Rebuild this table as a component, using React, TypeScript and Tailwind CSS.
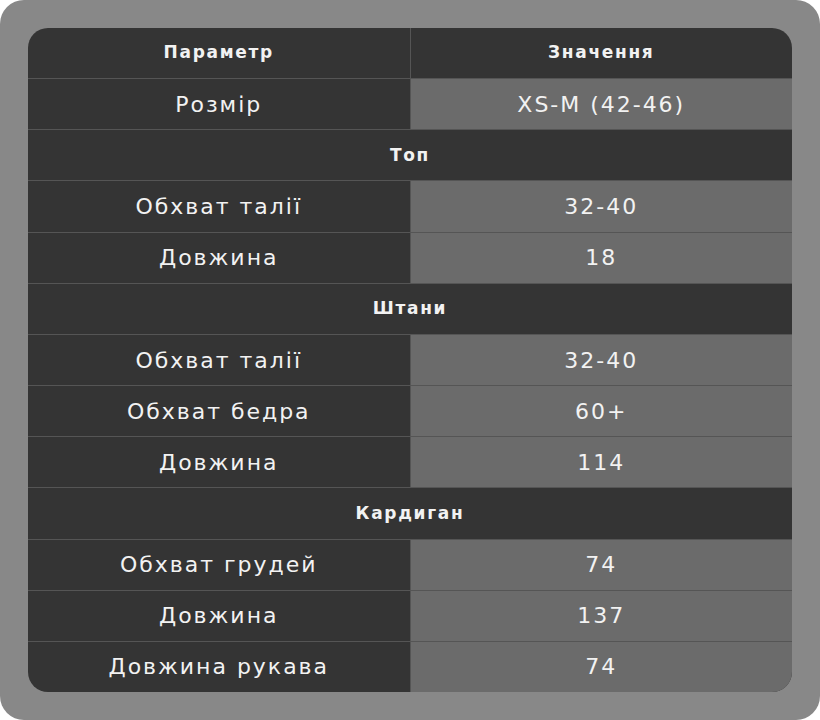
import React from 'react';

type Row =
    | { kind: 'section'; label: string }
    | { kind: 'item'; label: string; value: string };

const ROWS: Row[] = [
    { kind: 'item', label: 'Розмір', value: 'XS-M (42-46)' },
    { kind: 'section', label: 'Топ' },
    { kind: 'item', label: 'Обхват талії', value: '32-40' },
    { kind: 'item', label: 'Довжина', value: '18' },
    { kind: 'section', label: 'Штани' },
    { kind: 'item', label: 'Обхват талії', value: '32-40' },
    { kind: 'item', label: 'Обхват бедра', value: '60+' },
    { kind: 'item', label: 'Довжина', value: '114' },
    { kind: 'section', label: 'Кардиган' },
    { kind: 'item', label: 'Обхват грудей', value: '74' },
    { kind: 'item', label: 'Довжина', value: '137' },
    { kind: 'item', label: 'Довжина рукава', value: '74' },
];

export default function App() {
    return (
        <div className="h-[720px] w-[820px] bg-white">
        <div
        className="h-full w-full rounded-[24px] bg-[#888888] p-[28px]"
        style={{ fontFamily: '"DejaVu Sans", "Noto Sans", sans-serif' }}
        >
        <div className="flex h-full flex-col overflow-hidden rounded-[20px] bg-[#343434] text-[#f2f2f2]">
        <div className="flex flex-1">
        <div className="flex flex-1 items-center justify-center border-r border-[#555555] text-[17px] font-semibold tracking-[0.1em]">
        Параметр
        </div>
        <div className="flex flex-1 items-center justify-center text-[17px] font-semibold tracking-[0.1em]">
        Значення
        </div>
        </div>
        {ROWS.map((r, i) =>
            r.kind === 'section' ? (
                <div
                key={i}
                className="flex flex-1 items-center justify-center border-t border-[#555555] text-[17px] font-semibold tracking-[0.1em]"
                >
                {r.label}
                </div>
            ) : (
                <div key={i} className="flex flex-1 border-t border-[#555555]">
                <div className="flex flex-1 items-center justify-center border-r border-[#555555] text-[22px] tracking-[0.09em]">
                {r.label}
                </div>
                <div className="flex flex-1 items-center justify-center bg-[#6b6b6b] text-[22px] tracking-[0.09em]">
                {r.value}
                </div>
                </div>
            )
        )}
        </div>
        </div>
        </div>
    );
}
